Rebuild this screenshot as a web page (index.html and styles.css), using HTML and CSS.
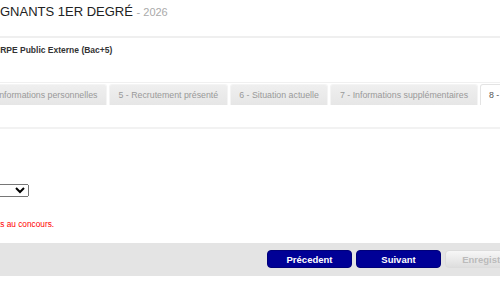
FILE: index.html
```html
<!DOCTYPE html>
<html lang="fr">
<head>
  <meta charset="UTF-8" />
  <title>Inscription - Enseignants 1er degré</title>
  <link rel="stylesheet" href="styles.css">
</head>
<body>
  <div class="page">
    <div class="page-header">
      <h1>ENSEIGNANTS 1ER DEGRÉ <span class="year">- 2026</span></h1>
    </div>

    <p class="concours">CRPE Public Externe (Bac+5)</p>

    <div class="tabs-wrap">
      <ul class="tabs">
        <li class="tab">4 - Informations personnelles</li>
        <li class="tab">5 - Recrutement présenté</li>
        <li class="tab">6 - Situation actuelle</li>
        <li class="tab">7 - Informations supplémentaires</li>
        <li class="tab active">8 - Validation</li>
      </ul>
    </div>

    <div class="tab-panel">
      <div class="field">
        <select class="choice">
          <option></option>
          <option>Oui</option>
          <option>Non</option>
        </select>
      </div>
      <p class="error-message">Sélection obligatoire pour les candidats au concours.</p>
    </div>

    <div class="actions">
      <button class="btn">Précedent</button>
      <button class="btn">Suivant</button>
      <button class="btn btn-disabled" disabled>Enregistrer</button>
    </div>
  </div>
</body>
</html>
```

FILE: styles.css
```css
* {
  box-sizing: border-box;
}
html,
body {
  overflow: hidden;
}
body {
  margin: 0;
  background-color: #fff;
  font-family: "Liberation Sans", Arial, sans-serif;
  color: #222;
}

/* la page est plus large que la fenêtre, on la décale vers la gauche */
.page {
  width: 698px;
  margin-left: -160px;
}

.page-header {
  height: 38px;
  padding: 4px 0 0 121px;
  border-bottom: 2px solid #efefef;
}
.page-header h1 {
  margin: 0;
  font-size: 13px;
  line-height: 16px;
  font-weight: normal;
  color: #222;
}
.year {
  font-size: 11px;
  color: #aaa;
}

.concours {
  margin: 7px 0 0;
  padding-left: 154px;
  font-size: 8.5px;
  line-height: 10px;
  font-weight: bold;
  color: #333;
}

.tabs-wrap {
  margin-top: 27px;
  border-top: 1px solid #f0f0f0;
  padding: 1px 0 0 134.5px;
}
.tabs {
  display: flex;
  gap: 2px;
  margin: 0;
  padding: 0;
  list-style: none;
}
.tab {
  height: 21px;
  padding: 0 8.5px;
  display: flex;
  align-items: center;
  font-size: 8.8px;
  color: #999;
  white-space: nowrap;
  background: linear-gradient(#efefef, #e6e6e6);
  border: 1px solid #f4f4f4;
  border-bottom: none;
  border-radius: 3px 3px 0 0;
}
.tab.active {
  background: #fff;
  color: #555;
  border-color: #e4e4e4;
}

.tab-panel {
  margin-top: 22px;
  border-top: 2px solid #f2f2f2;
  height: 116px;
  padding-top: 50px;
}
.field {
  padding-left: 119px;
}
.choice {
  width: 70px;
  height: 13px;
  font-size: 8px;
  padding: 0;
}
.error-message {
  margin: 22px 0 0;
  padding-left: 20px;
  font-size: 8.3px;
  line-height: 10px;
  color: #f00;
  white-space: nowrap;
}

.actions {
  height: 33px;
  background-color: #e4e4e4;
  display: flex;
  justify-content: flex-end;
  align-items: flex-start;
  gap: 4px;
  padding: 7px 8px 0 0;
}
.btn {
  width: 85px;
  height: 18px;
  padding: 0;
  border: 1px solid #00007a;
  border-radius: 4px;
  background-color: #000096;
  color: #fff;
  font-family: "Liberation Sans", Arial, sans-serif;
  font-size: 9.5px;
  font-weight: bold;
  cursor: pointer;
}
.btn:hover {
  background-color: #0000c0;
}
.btn-disabled {
  background: linear-gradient(#f7f7f7, #dedede);
  border-color: #dcdcdc;
  color: #bbb;
  cursor: default;
}
```
